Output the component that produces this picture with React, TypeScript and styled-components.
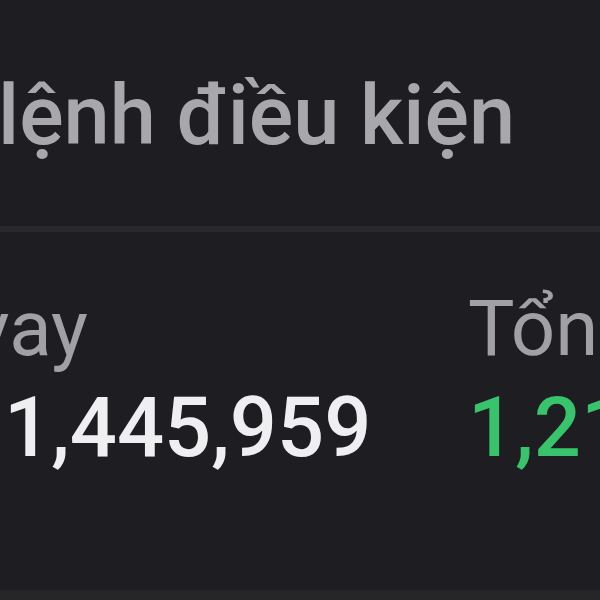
import styled, { createGlobalStyle } from 'styled-components'

const GlobalStyle = createGlobalStyle`
  html, body {
    margin: 0;
    padding: 0;
    background: #1e1e22;
    overflow: hidden;
  }
  body {
    font-family: Roboto, 'Noto Sans', sans-serif;
  }
`

function App() {
  return (
    <Page>
      <GlobalStyle />
      <Header>
        <Title>lệnh điều kiện</Title>
      </Header>
      <Divider />
      <Stats>
        <Stat>
          <Label $shift={-28}>vay</Label>
          <Value>1,445,959</Value>
        </Stat>
        <Stat>
          <Label $shift={4}>Tổng</Label>
          <Value $positive>1,21</Value>
        </Stat>
      </Stats>
      <Footer />
    </Page>
  )
}

const Page = styled.div`
  width: 600px;
  height: 600px;
  display: flex;
  flex-direction: column;
  overflow: hidden;
  background: #1e1e22;
`

const Header = styled.div`
  height: 226px;
  display: flex;
  align-items: flex-start;
  padding-top: 74px;
  box-sizing: border-box;
`

const Title = styled.div`
  font-size: 83px;
  font-weight: 500;
  color: #a7a7ac;
  line-height: 1;
  white-space: nowrap;
  margin-left: -2px;
`

const Divider = styled.div`
  height: 6px;
  background: #29292d;
`

const Stats = styled.div`
  flex: 1;
  display: grid;
  grid-template-columns: 464px 1fr;
  padding-top: 58px;
  box-sizing: border-box;
`

const Stat = styled.div`
  display: flex;
  flex-direction: column;
  white-space: nowrap;
  overflow: visible;
`

const Label = styled.div<{ $shift?: number }>`
  font-size: 78px;
  font-weight: 400;
  color: #a0a0a5;
  line-height: 1;
  margin-left: ${(p) => p.$shift ?? 0}px;
`

const Value = styled.div<{ $positive?: boolean }>`
  font-size: 83px;
  font-weight: 500;
  color: ${(p) => (p.$positive ? '#38c46c' : '#efeff1')};
  line-height: 1;
  margin-top: 18px;
  margin-left: 4px;
`

const Footer = styled.div`
  height: 10px;
  background: #262629;
`

export default App
